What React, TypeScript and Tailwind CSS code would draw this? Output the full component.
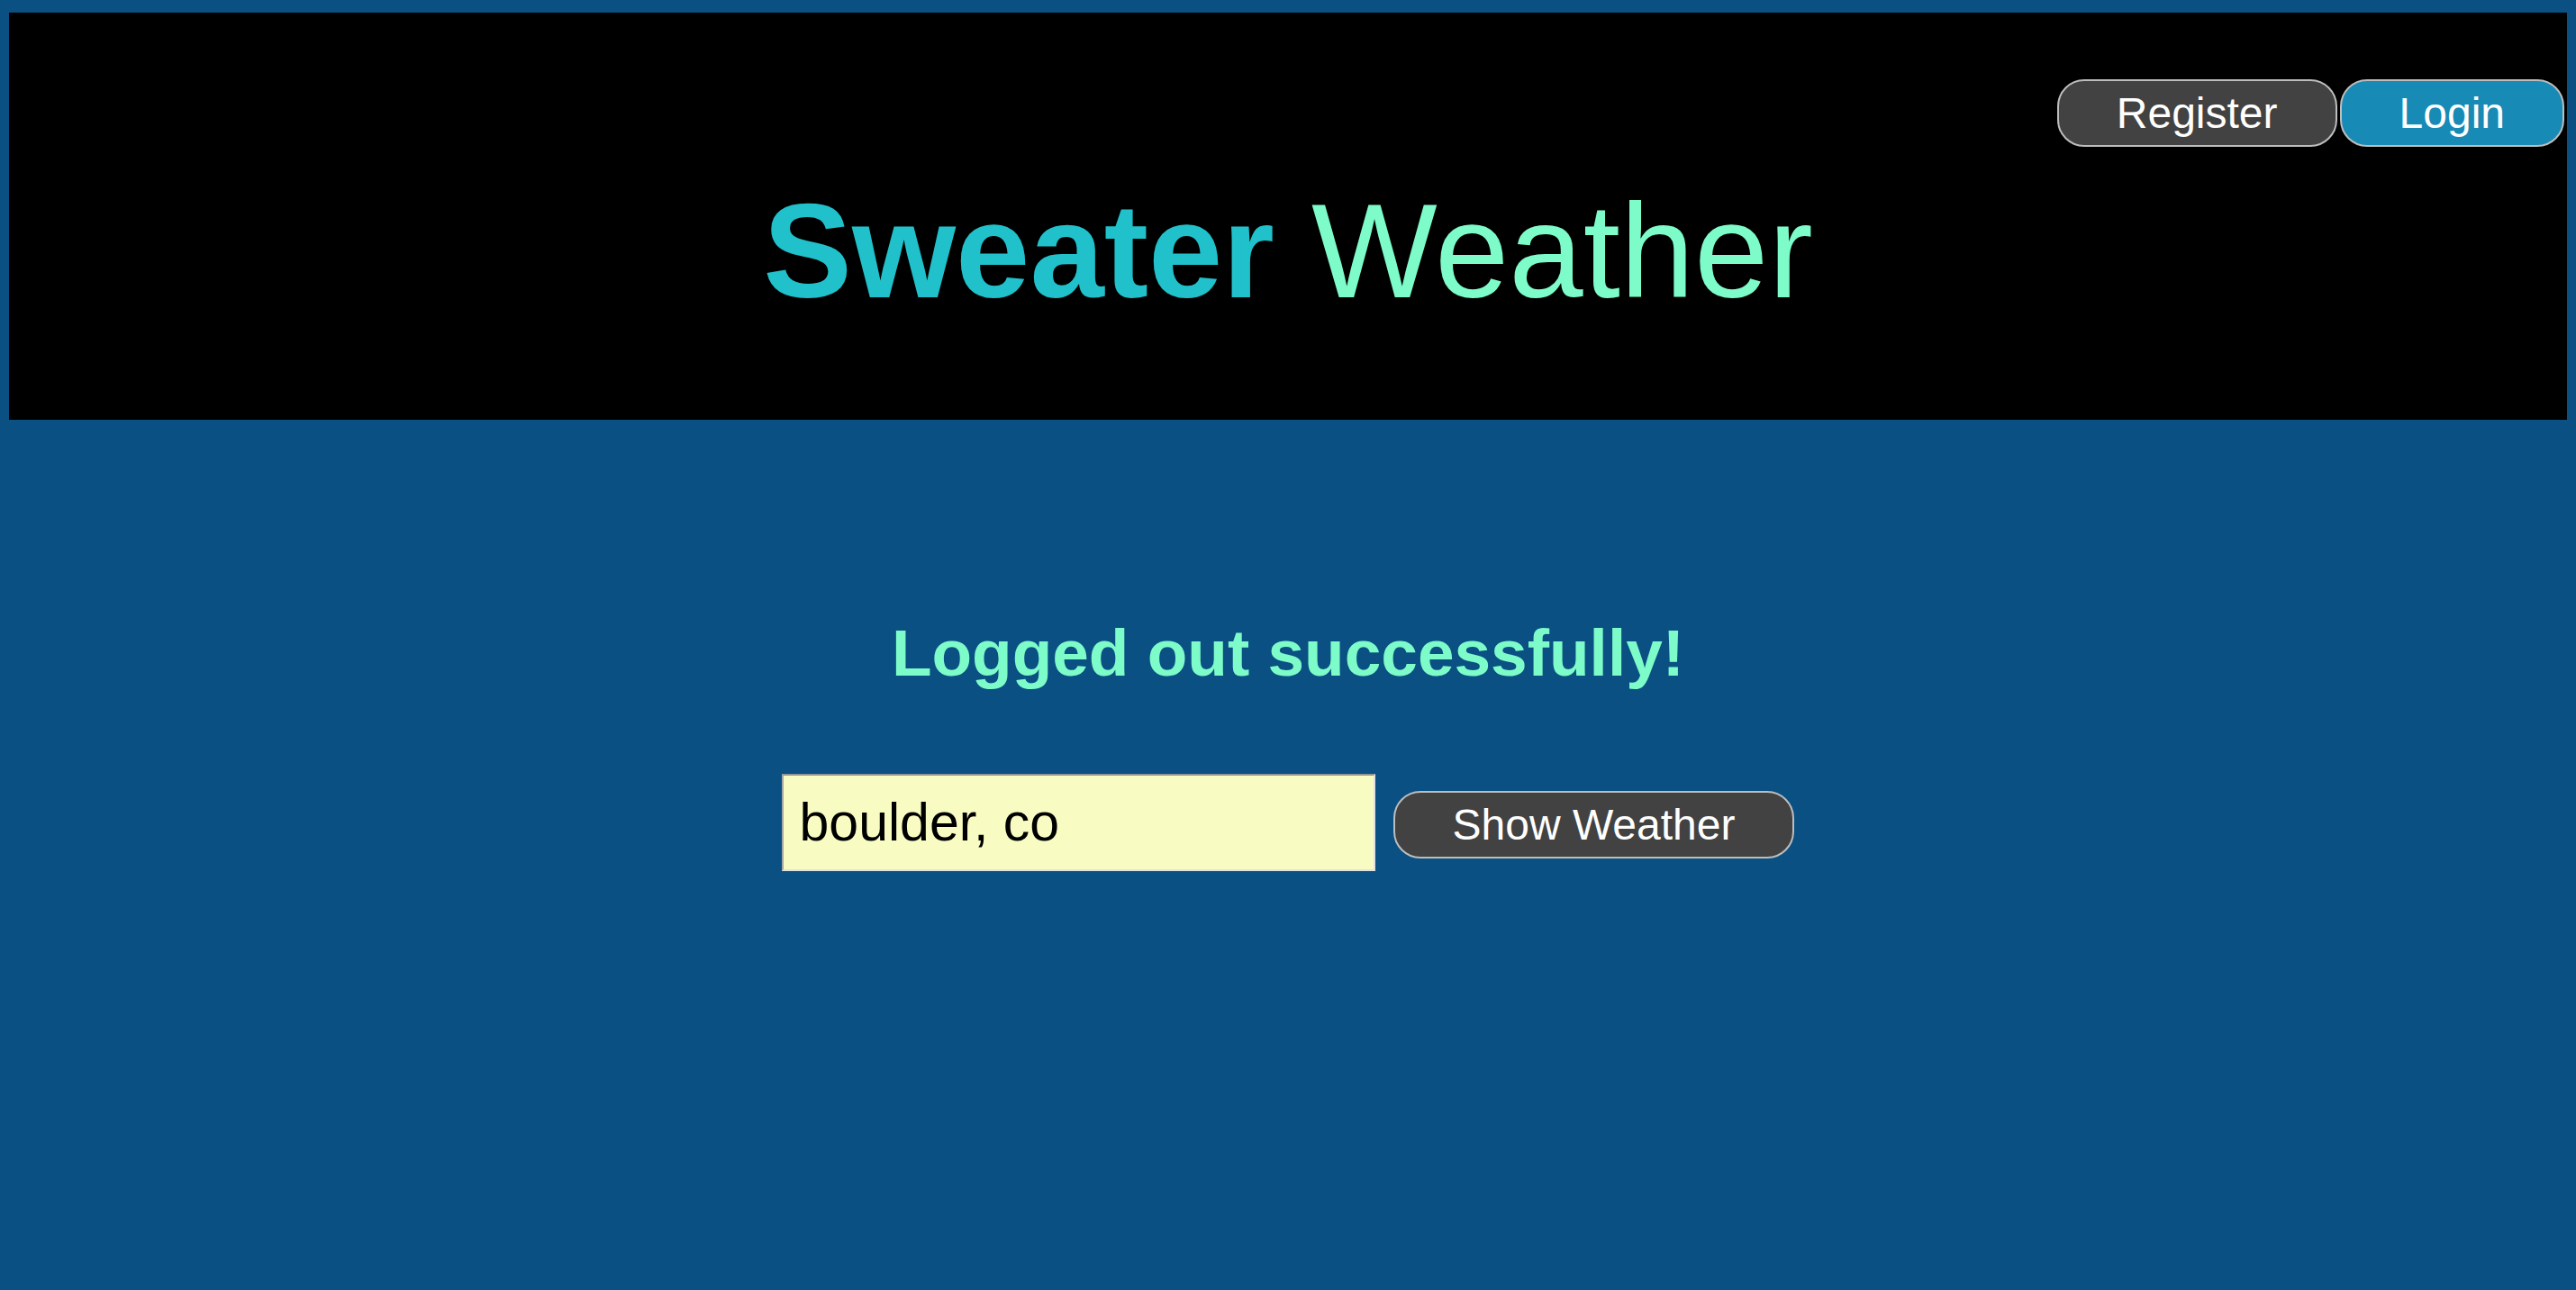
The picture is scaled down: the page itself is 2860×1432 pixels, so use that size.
import { useState } from "react";

const pillButton =
  "rounded-[30px] border-2 border-[#bdbdbd] px-16 py-2 text-[48px] leading-[1.15] text-white";

export default function App() {
  const [location, setLocation] = useState("boulder, co");

  return (
    <div className="min-h-screen bg-[#0a5083] pt-[14px] font-['Liberation_Sans',Arial,sans-serif]">
      <header className="mx-[10px] flex flex-col bg-black pt-[74px] pb-[113px]">
        <nav className="flex justify-end gap-[3px] pr-[3px]">
          <button type="button" className={`${pillButton} bg-[#424242]`}>
            Register
          </button>
          <button type="button" className={`${pillButton} bg-[#178ab5]`}>
            Login
          </button>
        </nav>
        <h1 className="mt-[42px] text-center text-[148px] leading-none">
          <span className="font-bold text-[#20c1cb]">Sweater</span>{" "}
          <span className="font-normal text-[#7dfbc8]">Weather</span>
        </h1>
      </header>

      <main className="flex flex-col items-center pt-[222px]">
        <p className="text-[73px] font-bold leading-none text-[#7dfbc8]">
          Logged out successfully!
        </p>
        <form
          className="mt-[98px] flex items-center gap-[20px]"
          onSubmit={(event) => event.preventDefault()}
        >
          <input
            value={location}
            onChange={(event) => setLocation(event.target.value)}
            className="h-[108px] w-[659px] border-2 border-t-[#939393] border-l-[#a6a6a6] border-r-[#e2e2e2] border-b-[#e2e2e2] bg-[#f9fcc2] px-[18px] text-[59px] text-black outline-none"
          />
          <button type="submit" className={`${pillButton} mt-[5px] bg-[#424242]`}>
            Show Weather
          </button>
        </form>
      </main>
    </div>
  );
}
